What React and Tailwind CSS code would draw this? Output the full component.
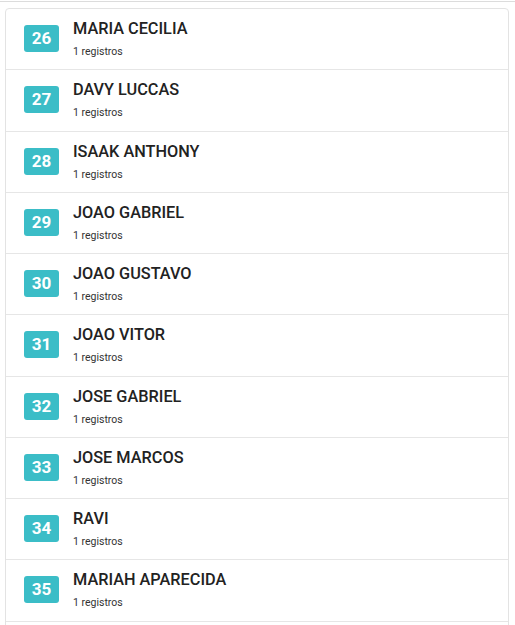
import React from 'react';

const alunos = [
  { n: 26, nome: 'MARIA CECILIA' },
  { n: 27, nome: 'DAVY LUCCAS' },
  { n: 28, nome: 'ISAAK ANTHONY' },
  { n: 29, nome: 'JOAO GABRIEL' },
  { n: 30, nome: 'JOAO GUSTAVO' },
  { n: 31, nome: 'JOAO VITOR' },
  { n: 32, nome: 'JOSE GABRIEL' },
  { n: 33, nome: 'JOSE MARCOS' },
  { n: 34, nome: 'RAVI' },
  { n: 35, nome: 'MARIAH APARECIDA' },
];

export default function App() {
  return (
    <div className="w-[515px] h-[625px] overflow-hidden bg-white" style={{ fontFamily: 'Roboto, "Liberation Sans", sans-serif' }}>
      <div className="h-px mt-px bg-[#dcdcdc]" />
      <div className="ml-[5px] mt-[6px] w-[504px] border border-[#e3e3e3] rounded-[4px]">
        {alunos.map((a) => (
          <div key={a.n} className="h-[61.25px] flex items-start px-[18px] border-b border-[#e6e6e6]">
            <div className="mt-[16px] w-[35px] h-[27px] rounded-[3px] bg-[#3bbdc7] text-white font-bold text-[17px] leading-[27px] text-center shrink-0">
              {a.n}
            </div>
            <div className="ml-[14px] mt-[10px]">
              <div className="text-[16.3px] leading-[20px] font-medium text-[#222]">{a.nome}</div>
              <div className="mt-[6px] text-[10.5px] leading-[14px] text-[#333]">1 registros</div>
            </div>
          </div>
        ))}
        {/* proxima linha fica abaixo da dobra */}
        <div className="h-[60px]" />
      </div>
    </div>
  );
}
